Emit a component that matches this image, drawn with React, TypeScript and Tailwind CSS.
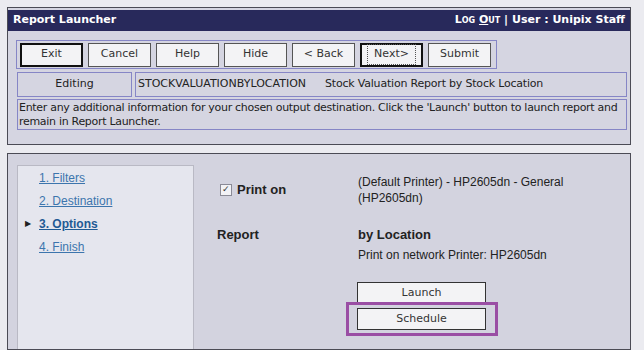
import React from 'react';

const btnFont = { fontFamily: '"DejaVu Sans", Verdana, sans-serif' };

const ToolButton: React.FC<{ label: string; strong?: boolean; focused?: boolean }> = ({
  label,
  strong,
  focused,
}) => (
  <div
    className={`w-[63px] h-[24px] flex items-center justify-center bg-[#f3f3f5] text-[11px] text-[#333] ${
      strong ? 'border-2 border-[#111]' : 'border border-[#555]'
    }`}
  >
    {focused ? (
      <span className="px-[6px] py-[1px] border border-dotted border-[#555]">{label}</span>
    ) : (
      label
    )}
  </div>
);

const NavLink: React.FC<{ label: string; active?: boolean }> = ({ label, active }) => (
  <div className="flex items-center h-[23px]">
    <span className="w-[21px] pl-[7px] text-[8px] text-[#222]">{active ? '▶' : ''}</span>
    <span
      className={`underline text-[12px] ${active ? 'font-bold text-[#1f5a94]' : 'text-[#3c75ad]'}`}
    >
      {label}
    </span>
  </div>
);

export default function App() {
  const tools = ['Exit', 'Cancel', 'Help', 'Hide', '< Back', 'Next>', 'Submit'];

  return (
    <div
      className="w-[644px] h-[350px] bg-[#ebebf0] overflow-hidden pl-[7px] pt-[7px] flex flex-col"
      style={btnFont}
    >
      {/* top panel */}
      <div className="w-[624px] h-[138px] border border-[#4b4b55] bg-[#d5d5e1] flex flex-col shrink-0">
        <div className="h-[21px] mt-[2px] bg-[#28295b] text-white text-[11px] font-bold flex items-center justify-between px-[5px]">
          <span>Report Launcher</span>
          <span>
            <span className="[font-variant:small-caps]">
              Log <span className="underline">O</span>ut
            </span>{' '}
            | User : Unipix Staff
          </span>
        </div>

        <div className="ml-[8px] mt-[9px] w-[481px] h-[29px] border border-[#8686c6] flex items-center gap-[5px] pl-[3px]">
          {tools.map((t) => (
            <ToolButton key={t} label={t} strong={t === 'Exit' || t === 'Next>'} focused={t === 'Next>'} />
          ))}
        </div>

        <div className="ml-[9px] mt-[3px] mr-[3px] h-[25px] flex gap-[3px] text-[11px] text-[#222]">
          <div className="w-[115px] border border-[#8686c6] flex items-center justify-center">Editing</div>
          <div className="flex-1 border border-[#8686c6] flex items-center px-[2px]">
            <span>STOCKVALUATIONBYLOCATION</span>
            <span className="ml-[19px] tracking-[-0.2px]">Stock Valuation Report by Stock Location</span>
          </div>
        </div>

        <div className="ml-[9px] mt-[2px] mr-[3px] h-[31px] border border-[#8686c6] text-[11px] leading-[14px] tracking-[-0.3px] text-[#222] px-[1px] pt-[1px]">
          Enter any additional information for your chosen output destination. Click the 'Launch' button to launch report and remain in Report Launcher.
        </div>
      </div>

      {/* lower panel */}
      <div
        className="mt-[8px] w-[624px] h-[200px] border border-[#4b4b55] bg-[#d3d3df] flex pl-[9px] pt-[11px]"
        style={{ fontFamily: '"Liberation Sans", Arial, sans-serif' }}
      >
        <div className="w-[177px] h-full bg-[#e5e6ee] border-l border-t border-r border-[#b9b9c4]">
          <NavLink label="1. Filters" />
          <NavLink label="2. Destination" />
          <NavLink label="3. Options" active />
          <NavLink label="4. Finish" />
        </div>

        <div className="flex-1 relative text-[#222]">
          <div className="flex pt-[9px]">
            <div className="w-[164px] pl-[26px] pt-[6px] flex items-center gap-[5px] self-start">
              <span className="w-[12px] h-[12px] border border-[#8a8a96] bg-[#f2f2f6] flex items-center justify-center text-[9px] leading-none text-[#333]">
                ✓
              </span>
              <span className="text-[13px] font-bold">Print on</span>
            </div>
            <div className="text-[12px] leading-[16px]">
              (Default Printer) - HP2605dn - General
              <br />
              (HP2605dn)
            </div>
          </div>

          <div className="flex mt-[21px]">
            <div className="w-[164px] pl-[23px] text-[13px] font-bold leading-[16px]">Report</div>
            <div>
              <div className="text-[13px] font-bold leading-[16px]">by Location</div>
              <div className="text-[12px] leading-[16px] mt-[4px]">Print on network Printer: HP2605dn</div>
            </div>
          </div>

          <div className="ml-[163px] mt-[19px] w-[129px] flex flex-col gap-[4px] text-[11px] text-[#333]" style={btnFont}>
            <div className="h-[22px] border border-[#333] bg-[#f3f3f5] flex items-center justify-center">Launch</div>
            <div className="relative h-[22px] border border-[#333] bg-[#f3f3f5] flex items-center justify-center">
              Schedule
              <div className="absolute -left-[12px] -top-[7px] w-[152px] h-[34px] border-[3px] border-[#9a4ea4]" />
            </div>
          </div>
        </div>
      </div>
    </div>
  );
}
